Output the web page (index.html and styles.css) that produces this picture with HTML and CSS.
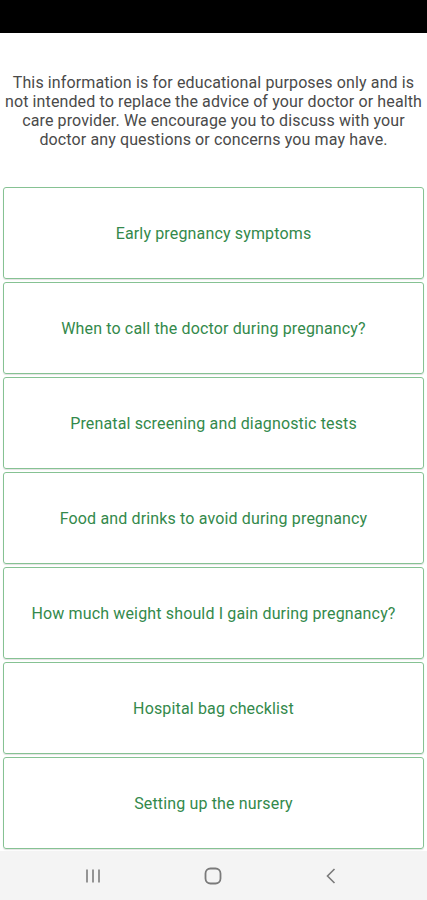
FILE: index.html
```html
<!DOCTYPE html>
<html lang="en">

<head>
  <meta charset="UTF-8" />
  <title>Pregnancy Guide</title>
  <link rel="stylesheet" href="styles.css">
</head>

<body>
  <div class="status-bar"></div>

  <main class="content">
    <p class="disclaimer">
      This information is for educational purposes only and is not intended to replace the advice of your doctor or health care provider. We encourage you to discuss with your doctor any questions or concerns you may have.
    </p>

    <div class="topic-list">
      <div class="topic">Early pregnancy symptoms</div>
      <div class="topic">When to call the doctor during pregnancy?</div>
      <div class="topic">Prenatal screening and diagnostic tests</div>
      <div class="topic">Food and drinks to avoid during pregnancy</div>
      <div class="topic">How much weight should I gain during pregnancy?</div>
      <div class="topic">Hospital bag checklist</div>
      <div class="topic">Setting up the nursery</div>
    </div>
  </main>

  <nav class="nav-bar">
    <svg width="16" height="16" viewBox="0 0 16 16">
      <path d="M2 1.5v13M8 1.5v13M14 1.5v13" stroke="#8a8a8a" stroke-width="1.8" fill="none" />
    </svg>
    <svg width="18" height="18" viewBox="0 0 18 18">
      <rect x="1.5" y="1.5" width="15" height="15" rx="5" stroke="#7a7a7a" stroke-width="1.8" fill="none" />
    </svg>
    <svg width="12" height="16" viewBox="0 0 12 16">
      <path d="M9.5 1L2.5 8l7 7" stroke="#7a7a7a" stroke-width="1.6" fill="none" />
    </svg>
  </nav>
</body>

</html>
```

FILE: styles.css
```css
body {
  margin: 0;
  font-family: Roboto, "Noto Sans", sans-serif;
  background: #fff;
  width: 427px;
  height: 900px;
  display: flex;
  flex-direction: column;
  overflow: hidden;
}

.status-bar {
  height: 33px;
  background: #000;
  flex-shrink: 0;
}

.content {
  flex: 1;
}

.disclaimer {
  margin: 40px 0 0;
  text-align: center;
  font-size: 16px;
  letter-spacing: 0.12px;
  line-height: 19px;
  color: #4a4a4a;
}

.topic-list {
  display: flex;
  flex-direction: column;
  gap: 3px;
  margin-top: 38px;
  padding: 0 3px;
}

.topic {
  height: 90px;
  display: flex;
  align-items: center;
  justify-content: center;
  text-align: center;
  border: 1px solid #86c293;
  border-radius: 3px;
  box-shadow: 0 1px 1px rgba(0, 0, 0, 0.12);
  color: #33894b;
  font-size: 16px;
  letter-spacing: 0.15px;
}

.nav-bar {
  height: 49px;
  flex-shrink: 0;
  background: #f4f4f4;
  display: flex;
  align-items: center;
  gap: 103px;
  padding-left: 85px;
}
```
